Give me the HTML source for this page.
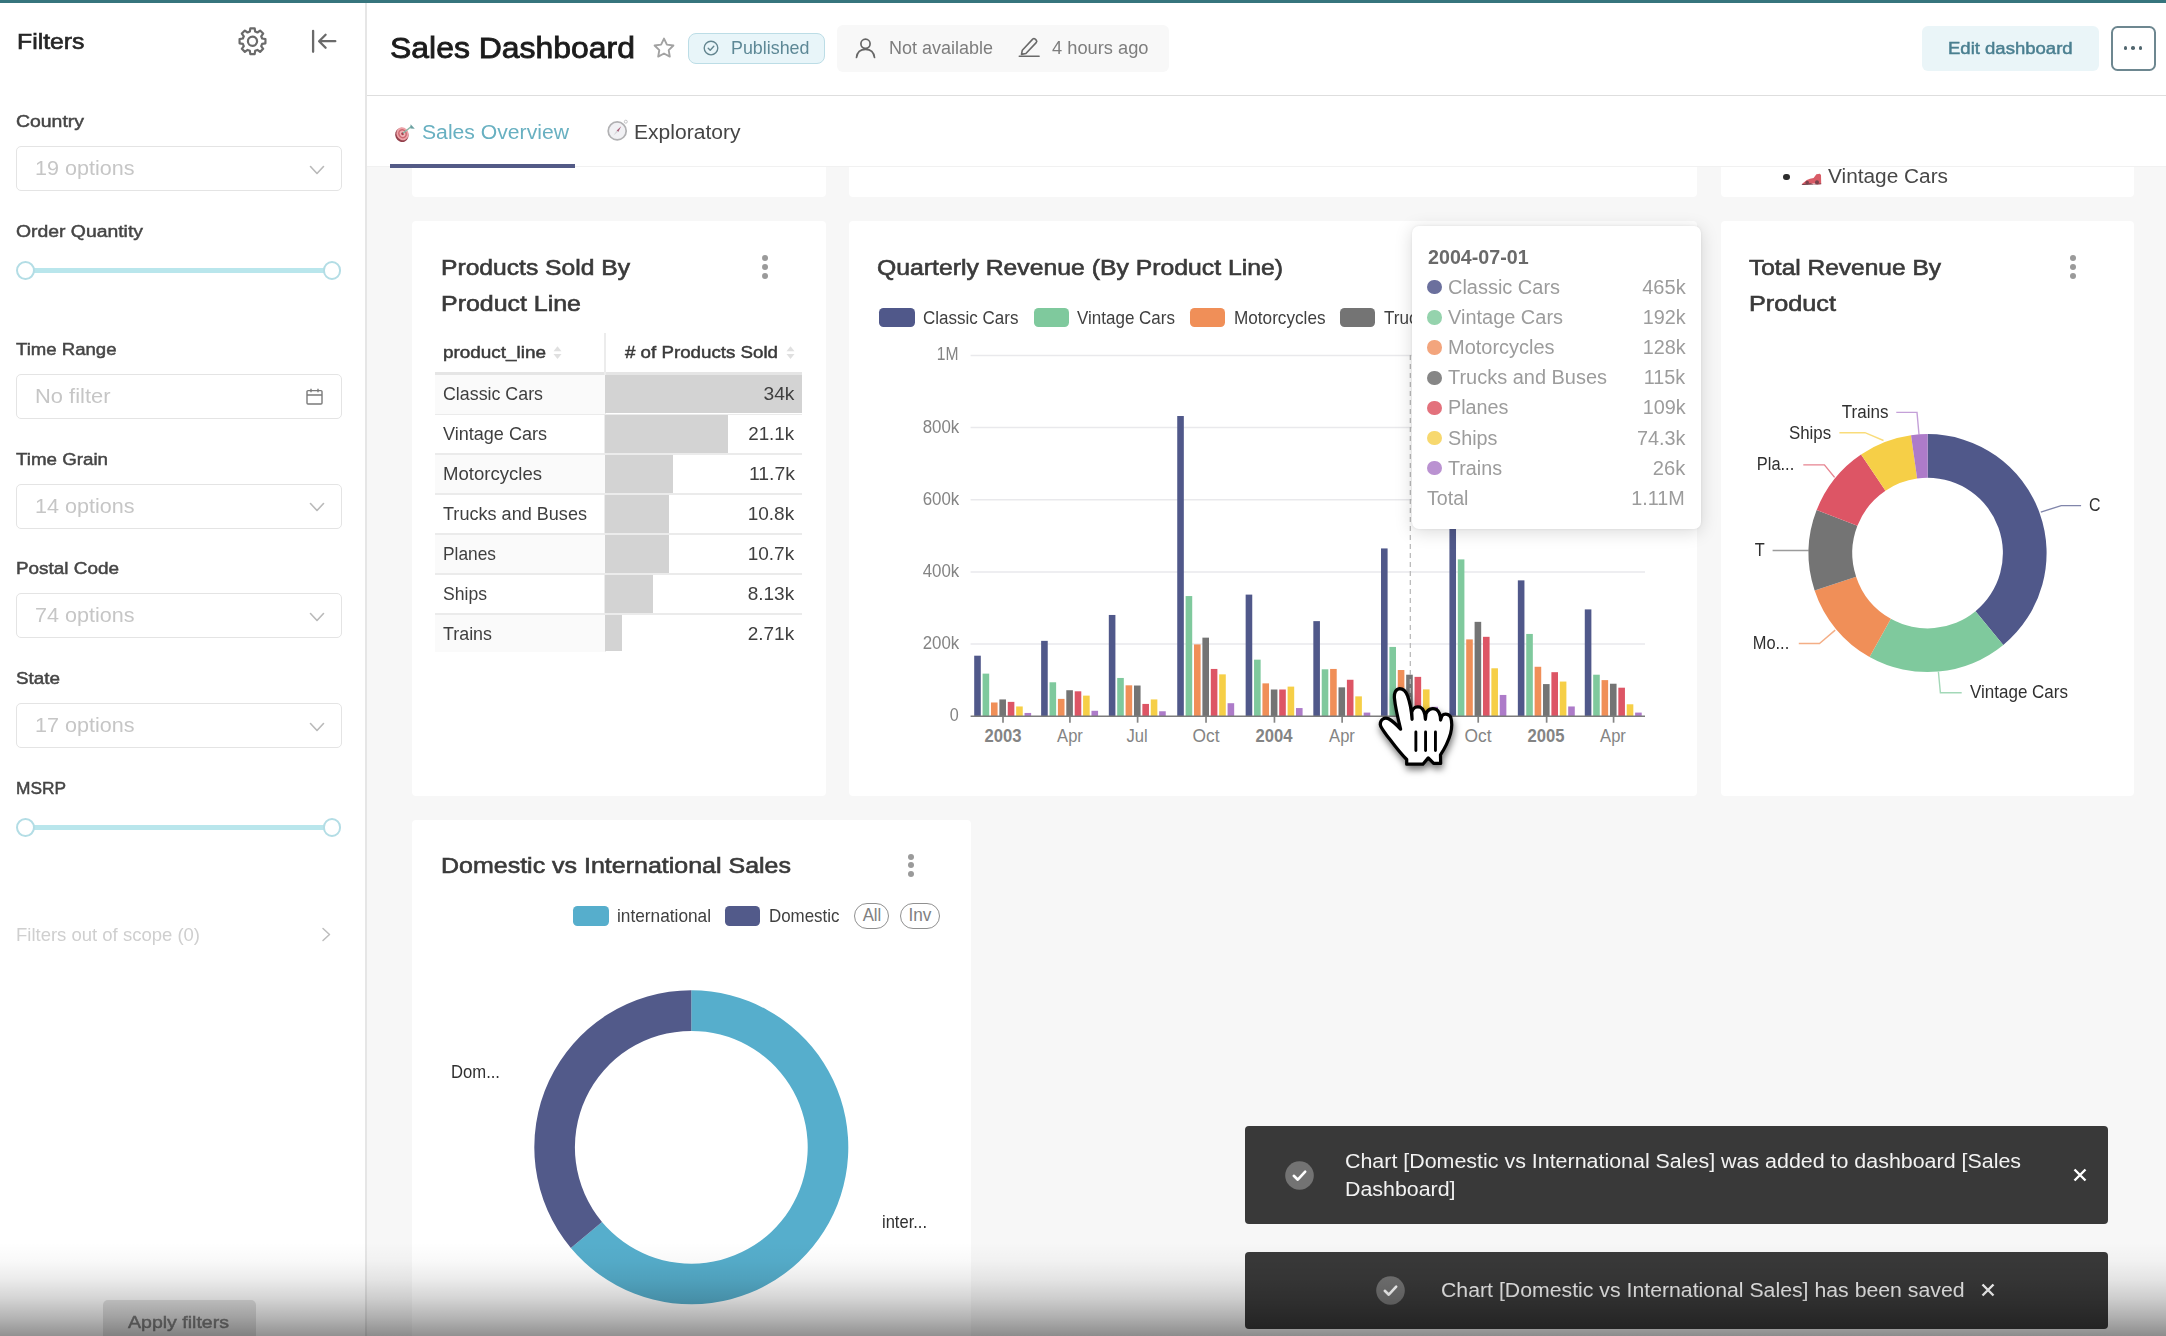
<!DOCTYPE html>
<html><head><meta charset="utf-8"><title>Sales Dashboard</title>
<style>
*{box-sizing:border-box;margin:0;padding:0}
html,body{width:2166px;height:1336px;overflow:hidden}
body{position:relative;background:#f7f7f7;font-family:"Liberation Sans",sans-serif;color:#333}
.a{position:absolute}
.t{position:absolute;white-space:nowrap;line-height:1;display:block}
.card{position:absolute;background:#fff;border-radius:4px}
.sel{position:absolute;left:16px;width:326px;height:45px;border:1.7px solid #e4e4e4;border-radius:5px;background:#fff}
svg{position:absolute;overflow:visible}
</style></head><body>
<div class="a" style="left:0;top:0;width:365px;height:1336px;background:#fff"></div>
<div class="a" style="left:365px;top:0;width:1.5px;height:1336px;background:#e6e6e6"></div>
<div class="a" style="left:366.5px;top:0;width:1800px;height:95px;background:#fff"></div>
<div class="a" style="left:366.5px;top:94.5px;width:1800px;height:1.5px;background:#dedede"></div>
<div class="a" style="left:366.5px;top:96px;width:1800px;height:70.5px;background:#fff"></div>
<div class="a" style="left:0;top:0;width:2166px;height:3px;background:#36757d"></div>
<span class="t" id="t0" style="top:30.00px;font-size:22.74px;color:#262626;-webkit-text-stroke:0.64px #262626;left:16.50px;transform-origin:0 50%;transform:scaleX(1.0906);">Filters</span>
<svg style="left:0;top:0" width="400" height="100" viewBox="0 0 400 100" fill="none" stroke="#6a6a6a" stroke-width="2.2" stroke-linejoin="round" stroke-linecap="round"><circle cx="252.5" cy="41.2" r="4.600"/><path d="M249.83 31.56L250.34 28.28L254.66 28.28L255.17 31.56L257.42 32.50L260.11 30.54L263.16 33.59L261.20 36.28L262.14 38.53L265.42 39.04L265.42 43.36L262.14 43.87L261.20 46.12L263.16 48.81L260.11 51.86L257.42 49.90L255.17 50.84L254.66 54.12L250.34 54.12L249.83 50.84L247.58 49.90L244.89 51.86L241.84 48.81L243.80 46.12L242.86 43.87L239.58 43.36L239.58 39.04L242.86 38.53L243.80 36.28L241.84 33.59L244.89 30.54L247.58 32.50Z"/></svg>
<svg style="left:0;top:0" width="400" height="100" viewBox="0 0 400 100" fill="none" stroke="#6a6a6a" stroke-width="2.3" stroke-linecap="round" stroke-linejoin="round"><path d="M313.100 30.800V51.800M335.300 41.200H319.300M325.600 34.700l-6.500 6.500 6.500 6.500"/></svg>
<span class="t" id="t1" style="top:113.00px;font-size:17.05px;color:#454545;-webkit-text-stroke:0.48px #454545;left:16.20px;transform-origin:0 50%;transform:scaleX(1.1402);">Country</span>
<div class="sel" style="top:146.0px"></div>
<span class="t" id="t2" style="top:158.00px;font-size:20.62px;color:#c6c6c6;left:34.50px;transform-origin:0 50%;transform:scaleX(1.0462);">19 options</span>
<svg style="left:309px;top:164.5px" width="16" height="10" viewBox="0 0 16 10" fill="none" stroke="#b9b9b9" stroke-width="1.6" stroke-linecap="round" stroke-linejoin="round"><path d="M1.5 1.5L8 8.5l6.5-7"/></svg>
<span class="t" id="t3" style="top:223.00px;font-size:17.05px;color:#454545;-webkit-text-stroke:0.48px #454545;left:16.20px;transform-origin:0 50%;transform:scaleX(1.1369);">Order Quantity</span>
<div class="a" style="left:26px;top:267.5px;width:306px;height:5.400px;background:#b9e6ec;border-radius:2px"></div>
<div class="a" style="left:15.9px;top:260.8px;width:18.800px;height:18.800px;border-radius:50%;background:#fff;border:2.600px solid #b3dde5"></div>
<div class="a" style="left:322.6px;top:260.8px;width:18.800px;height:18.800px;border-radius:50%;background:#fff;border:2.600px solid #b3dde5"></div>
<span class="t" id="t4" style="top:341.00px;font-size:17.05px;color:#454545;-webkit-text-stroke:0.48px #454545;left:16.20px;transform-origin:0 50%;transform:scaleX(1.0907);">Time Range</span>
<div class="sel" style="top:374px"></div>
<span class="t" id="t5" style="top:386.00px;font-size:20.62px;color:#c6c6c6;left:34.50px;transform-origin:0 50%;transform:scaleX(1.0631);">No filter</span>
<svg style="left:306px;top:388px" width="17" height="17" viewBox="0 0 17 17" fill="none" stroke="#7a7a7a" stroke-width="1.4" stroke-linejoin="round"><rect x="1" y="2.6" width="15" height="13.4" rx="1"/><path d="M1 7h15M5 .8v3.4M12 .8v3.4"/></svg>
<span class="t" id="t6" style="top:451.00px;font-size:17.05px;color:#454545;-webkit-text-stroke:0.48px #454545;left:16.20px;transform-origin:0 50%;transform:scaleX(1.1006);">Time Grain</span>
<div class="sel" style="top:483.5px"></div>
<span class="t" id="t7" style="top:496.00px;font-size:20.62px;color:#c6c6c6;left:34.50px;transform-origin:0 50%;transform:scaleX(1.0462);">14 options</span>
<svg style="left:309px;top:502.0px" width="16" height="10" viewBox="0 0 16 10" fill="none" stroke="#b9b9b9" stroke-width="1.6" stroke-linecap="round" stroke-linejoin="round"><path d="M1.5 1.5L8 8.5l6.5-7"/></svg>
<span class="t" id="t8" style="top:560.00px;font-size:17.05px;color:#454545;-webkit-text-stroke:0.48px #454545;left:16.20px;transform-origin:0 50%;transform:scaleX(1.1100);">Postal Code</span>
<div class="sel" style="top:593.0px"></div>
<span class="t" id="t9" style="top:605.00px;font-size:20.62px;color:#c6c6c6;left:34.50px;transform-origin:0 50%;transform:scaleX(1.0462);">74 options</span>
<svg style="left:309px;top:611.5px" width="16" height="10" viewBox="0 0 16 10" fill="none" stroke="#b9b9b9" stroke-width="1.6" stroke-linecap="round" stroke-linejoin="round"><path d="M1.5 1.5L8 8.5l6.5-7"/></svg>
<span class="t" id="t10" style="top:670.00px;font-size:17.05px;color:#454545;-webkit-text-stroke:0.48px #454545;left:16.20px;transform-origin:0 50%;transform:scaleX(1.1060);">State</span>
<div class="sel" style="top:703.0px"></div>
<span class="t" id="t11" style="top:715.00px;font-size:20.62px;color:#c6c6c6;left:34.50px;transform-origin:0 50%;transform:scaleX(1.0462);">17 options</span>
<svg style="left:309px;top:721.5px" width="16" height="10" viewBox="0 0 16 10" fill="none" stroke="#b9b9b9" stroke-width="1.6" stroke-linecap="round" stroke-linejoin="round"><path d="M1.5 1.5L8 8.5l6.5-7"/></svg>
<span class="t" id="t12" style="top:780.00px;font-size:17.05px;color:#454545;-webkit-text-stroke:0.48px #454545;left:16.20px;transform-origin:0 50%;transform:scaleX(1.0159);">MSRP</span>
<div class="a" style="left:26px;top:824.5px;width:306px;height:5.400px;background:#b9e6ec;border-radius:2px"></div>
<div class="a" style="left:15.9px;top:817.8px;width:18.800px;height:18.800px;border-radius:50%;background:#fff;border:2.600px solid #b3dde5"></div>
<div class="a" style="left:322.6px;top:817.8px;width:18.800px;height:18.800px;border-radius:50%;background:#fff;border:2.600px solid #b3dde5"></div>
<span class="t" id="t13" style="top:927.00px;font-size:17.67px;color:#cfcfcf;left:16.20px;transform-origin:0 50%;transform:scaleX(1.0475);">Filters out of scope (0)</span>
<svg style="left:321px;top:927px" width="10" height="15" viewBox="0 0 10 15" fill="none" stroke="#bdbdbd" stroke-width="1.5" stroke-linecap="round" stroke-linejoin="round"><path d="M2 1.5l6.5 6-6.5 6"/></svg>
<div class="a" style="left:103px;top:1299.5px;width:152.5px;height:45px;background:#e3e3e3;border-radius:5px"></div>
<span class="t" id="t14" style="top:1314.00px;font-size:17.05px;color:#7c7c7c;-webkit-text-stroke:0.48px #7c7c7c;left:128.00px;transform-origin:0 50%;transform:scaleX(1.1473);">Apply filters</span>
<span class="t" id="t15" style="top:33.00px;font-size:29.84px;color:#1b1b1b;-webkit-text-stroke:0.84px #1b1b1b;left:390.00px;transform-origin:0 50%;transform:scaleX(1.0707);">Sales Dashboard</span>
<svg style="left:652px;top:36px" width="24" height="24" viewBox="0 0 24 24" fill="none" stroke="#a2a2a2" stroke-width="1.9" stroke-linejoin="round"><path d="M12 2.6l2.9 6 6.5.9-4.7 4.6 1.1 6.5L12 17.5l-5.8 3.1 1.1-6.5L2.600 9.5l6.500-.9z"/></svg>
<div class="a" style="left:687.5px;top:33px;width:137px;height:31px;background:#e8f5f9;border:1.5px solid #bcdde6;border-radius:8px"></div>
<svg style="left:703.4px;top:40.300px" width="16" height="16" viewBox="0 0 16 16" fill="none" stroke="#63858f" stroke-width="1.35" stroke-linecap="round" stroke-linejoin="round"><circle cx="8" cy="8" r="6.800"/><path d="M5.200 8.200l2 2 3.600-4"/></svg>
<span class="t" id="t16" style="top:40.00px;font-size:17.67px;color:#5d8896;left:730.50px;transform-origin:0 50%;transform:scaleX(1.0121);">Published</span>
<div class="a" style="left:837px;top:25px;width:332px;height:46.5px;background:#f8f8f8;border-radius:6px"></div>
<svg style="left:855px;top:36.600px" width="21" height="22" viewBox="0 0 21 22" fill="none" stroke="#666" stroke-width="1.7" stroke-linecap="round"><circle cx="10.5" cy="6.8" r="4.6"/><path d="M1.5 20.5c.6-5.2 4.2-8.2 9-8.2s8.400 3 9 8.200"/></svg>
<span class="t" id="t17" style="top:40.00px;font-size:17.67px;color:#7d7d7d;left:889.00px;transform-origin:0 50%;transform:scaleX(1.0188);">Not available</span>
<svg style="left:1018px;top:36.300px" width="22" height="22" viewBox="0 0 22 22" fill="none" stroke="#6a6a6a" stroke-width="1.600" stroke-linecap="round" stroke-linejoin="round"><path d="M4.300 14.200L14.700 3.100a1.800 1.800 0 0 1 2.500 0l1 1a1.800 1.800 0 0 1 0 2.500L7.900 17.500l-4.400.900z"/><path d="M1.300 20.300h19.800"/></svg>
<span class="t" id="t18" style="top:40.00px;font-size:17.67px;color:#7d7d7d;left:1052.00px;transform-origin:0 50%;transform:scaleX(1.0347);">4 hours ago</span>
<div class="a" style="left:1921.5px;top:25.5px;width:177px;height:45px;background:#eaf5f8;border-radius:6px"></div>
<span class="t" id="t19" style="top:40.00px;font-size:17.05px;color:#4a7f90;-webkit-text-stroke:0.48px #4a7f90;left:1948.00px;transform-origin:0 50%;transform:scaleX(1.0875);">Edit dashboard</span>
<div class="a" style="left:2110.5px;top:25.5px;width:45.500px;height:45px;background:#fff;border:2.200px solid #6d8790;border-radius:6.500px"></div>
<div class="a" style="left:2123.9px;top:46.4px;width:3.6px;height:3.6px;border-radius:50%;background:#52676f"></div>
<div class="a" style="left:2131.4px;top:46.4px;width:3.6px;height:3.6px;border-radius:50%;background:#52676f"></div>
<div class="a" style="left:2138.9px;top:46.4px;width:3.6px;height:3.6px;border-radius:50%;background:#52676f"></div>
<svg style="left:392px;top:122px" width="24" height="24" viewBox="392 122 24 24"><g transform="rotate(-25 402.200 134)"><ellipse cx="401.500" cy="134.700" rx="6.600" ry="7.200" fill="#93404c"/><ellipse cx="402.600" cy="133.900" rx="6" ry="6.700" fill="#eea3a8"/><ellipse cx="402.600" cy="133.900" rx="4.300" ry="4.800" fill="#cb6870"/><ellipse cx="402.600" cy="133.900" rx="2.800" ry="3.200" fill="#f0b3b6"/><ellipse cx="402.600" cy="133.900" rx="1.300" ry="1.500" fill="#a3434e"/></g><path d="M403 133.300L411.300 126.500" stroke="#86b9a8" stroke-width="1.400"/><path d="M410.600 124.200l4.200 4.500-4.400-.2z" fill="#6a9fa0"/></svg>
<span class="t" id="t20" style="top:122.00px;font-size:20.62px;color:#68b0c1;left:421.60px;transform-origin:0 50%;transform:scaleX(1.0267);">Sales Overview</span>
<svg style="left:605px;top:118px" width="26" height="26" viewBox="605 118 26 26"><circle cx="625.800" cy="121.700" r="1.500" fill="none" stroke="#c4c4c6" stroke-width="1"/><circle cx="617.200" cy="130.900" r="9" fill="#f1f1f4" stroke="#b1b1b3" stroke-width="1.700"/><path d="M621.200 126.300l-3 5.600-1.500-1.300z" fill="#a8607a"/><path d="M613.400 135.600l3.200-5.100 1.500 1.300z" fill="#d4d4d8"/></svg>
<span class="t" id="t21" style="top:122.00px;font-size:20.62px;color:#454545;left:633.50px;transform-origin:0 50%;transform:scaleX(1.0217);">Exploratory</span>
<div class="card" style="left:412.0px;top:160px;width:414.0px;height:37.300px"></div>
<div class="card" style="left:412.0px;top:221px;width:414.0px;height:575px"></div>
<div class="card" style="left:849.0px;top:160px;width:848.0px;height:37.300px"></div>
<div class="card" style="left:849.0px;top:221px;width:848.0px;height:575px"></div>
<div class="card" style="left:1721.0px;top:160px;width:412.7px;height:37.300px"></div>
<div class="card" style="left:1721.0px;top:221px;width:412.7px;height:575px"></div>
<div class="card" style="left:412px;top:820px;width:558.5px;height:540px"></div>
<div class="a" style="left:366.5px;top:150px;width:1800px;height:16.500px;background:#fff"></div>
<div class="a" style="left:366.5px;top:165.500px;width:1800px;height:1.200px;background:#f1f1f1"></div>
<div class="a" style="left:389.5px;top:164px;width:185px;height:3.5px;background:#535a86"></div>
<div class="a" style="left:1783.1px;top:173.500px;width:6.600px;height:6.600px;border-radius:50%;background:#2e2e2e"></div>
<svg style="left:1801px;top:171px" width="22" height="14" viewBox="1801 171 22 14"><path d="M1801.600 184.300l5.200-4.300 3.200-1.300 3.600-.8 2.800-3.600 3.400-.6 1.200 1.200.2 9-4 .6-3-1-5 .4z" fill="#d95c67"/><path d="M1801.600 184.300l4-.6 5-.4 3 1 4-.6 3.600-.2v.8l-19 .8z" fill="#6d3a44"/><circle cx="1807.200" cy="182.600" r="1.800" fill="#7a434c"/><circle cx="1817" cy="182.300" r="2" fill="#7a434c"/></svg>
<span class="t" id="t22" style="top:166.00px;font-size:20.62px;color:#484848;left:1827.70px;transform-origin:0 50%;transform:scaleX(1.0104);">Vintage Cars</span>
<span class="t" id="t23" style="top:256.00px;font-size:22.74px;color:#3a3a3a;-webkit-text-stroke:0.64px #3a3a3a;left:441.00px;transform-origin:0 50%;transform:scaleX(1.0838);">Products Sold By</span>
<span class="t" id="t24" style="top:292.00px;font-size:22.74px;color:#3a3a3a;-webkit-text-stroke:0.64px #3a3a3a;left:441.00px;transform-origin:0 50%;transform:scaleX(1.0967);">Product Line</span>
<div class="a" style="left:762.0px;top:255.4px;width:6px;height:6px;border-radius:50%;background:#9a9a9a"></div>
<div class="a" style="left:762.0px;top:264.0px;width:6px;height:6px;border-radius:50%;background:#9a9a9a"></div>
<div class="a" style="left:762.0px;top:272.6px;width:6px;height:6px;border-radius:50%;background:#9a9a9a"></div>
<div class="a" style="left:435.0px;top:372px;width:367.0px;height:3.200px;background:#e5e5e5"></div>
<div class="a" style="left:603.8px;top:333px;width:2px;height:318.600px;background:#ececec"></div>
<span class="t" id="t25" style="top:344.00px;font-size:17.05px;color:#3a3a3a;-webkit-text-stroke:0.48px #3a3a3a;left:443.00px;transform-origin:0 50%;transform:scaleX(1.1100);">product_line</span>
<span class="t" id="t26" style="top:344.00px;font-size:17.05px;color:#3a3a3a;-webkit-text-stroke:0.48px #3a3a3a;left:625.00px;transform-origin:0 50%;transform:scaleX(1.0994);"># of Products Sold</span>
<svg style="left:552.9px;top:346.300px" width="9" height="13.400" viewBox="0 0 9 13.400"><path d="M4.500 0.300L8.500 5.300h-8z" fill="#e0e0e0"/><path d="M4.500 13.100L8.500 8.100h-8z" fill="#e0e0e0"/></svg>
<svg style="left:785.5px;top:346.300px" width="9" height="13.400" viewBox="0 0 9 13.400"><path d="M4.500 0.300L8.500 5.300h-8z" fill="#e0e0e0"/><path d="M4.500 13.100L8.500 8.100h-8z" fill="#e0e0e0"/></svg>
<div class="a" style="left:435.0px;top:375.2px;width:169.8px;height:39.1px;background:#fafafa"></div>
<div class="a" style="left:604.6px;top:375.2px;width:197.2px;height:38.3px;background:#d3d3d3"></div>
<span class="t" id="t27" style="top:386.00px;font-size:17.67px;color:#3f3f3f;left:443.00px;transform-origin:0 50%;transform:scaleX(1.0091);">Classic Cars</span>
<span class="t" id="t28" style="top:386.00px;font-size:17.67px;color:#3f3f3f;right:1371.50px;transform-origin:100% 50%;transform:scaleX(1.0889);">34k</span>
<div class="a" style="left:435.0px;top:413.5px;width:367.0px;height:1.5px;background:#ebebeb"></div>
<div class="a" style="left:604.6px;top:415.0px;width:123.0px;height:38.4px;background:#d3d3d3"></div>
<span class="t" id="t29" style="top:426.00px;font-size:17.67px;color:#3f3f3f;left:443.00px;transform-origin:0 50%;transform:scaleX(1.0221);">Vintage Cars</span>
<span class="t" id="t30" style="top:426.00px;font-size:17.67px;color:#3f3f3f;right:1371.50px;transform-origin:100% 50%;transform:scaleX(1.0647);">21.1k</span>
<div class="a" style="left:435.0px;top:454.2px;width:169.8px;height:39.9px;background:#fafafa"></div>
<div class="a" style="left:435.0px;top:453.4px;width:367.0px;height:1.5px;background:#ebebeb"></div>
<div class="a" style="left:604.6px;top:454.9px;width:68.8px;height:38.4px;background:#d3d3d3"></div>
<span class="t" id="t31" style="top:466.00px;font-size:17.67px;color:#3f3f3f;left:443.00px;transform-origin:0 50%;transform:scaleX(1.0511);">Motorcycles</span>
<span class="t" id="t32" style="top:466.00px;font-size:17.67px;color:#3f3f3f;right:1371.50px;transform-origin:100% 50%;transform:scaleX(1.0981);">11.7k</span>
<div class="a" style="left:435.0px;top:493.3px;width:367.0px;height:1.5px;background:#ebebeb"></div>
<div class="a" style="left:604.6px;top:494.8px;width:64.0px;height:38.4px;background:#d3d3d3"></div>
<span class="t" id="t33" style="top:506.00px;font-size:17.67px;color:#3f3f3f;left:443.00px;transform-origin:0 50%;transform:scaleX(1.0238);">Trucks and Buses</span>
<span class="t" id="t34" style="top:506.00px;font-size:17.67px;color:#3f3f3f;right:1371.50px;transform-origin:100% 50%;transform:scaleX(1.0763);">10.8k</span>
<div class="a" style="left:435.0px;top:534.0px;width:169.8px;height:39.9px;background:#fafafa"></div>
<div class="a" style="left:435.0px;top:533.2px;width:367.0px;height:1.5px;background:#ebebeb"></div>
<div class="a" style="left:604.6px;top:534.7px;width:64.0px;height:38.4px;background:#d3d3d3"></div>
<span class="t" id="t35" style="top:546.00px;font-size:17.67px;color:#3f3f3f;left:443.00px;transform-origin:0 50%;transform:scaleX(0.9815);">Planes</span>
<span class="t" id="t36" style="top:546.00px;font-size:17.67px;color:#3f3f3f;right:1371.50px;transform-origin:100% 50%;transform:scaleX(1.0763);">10.7k</span>
<div class="a" style="left:435.0px;top:573.1px;width:367.0px;height:1.5px;background:#ebebeb"></div>
<div class="a" style="left:604.6px;top:574.6px;width:48.8px;height:38.4px;background:#d3d3d3"></div>
<span class="t" id="t37" style="top:586.00px;font-size:17.67px;color:#3f3f3f;left:443.00px;transform-origin:0 50%;transform:scaleX(0.9961);">Ships</span>
<span class="t" id="t38" style="top:586.00px;font-size:17.67px;color:#3f3f3f;right:1371.50px;transform-origin:100% 50%;transform:scaleX(1.0763);">8.13k</span>
<div class="a" style="left:435.0px;top:613.8px;width:169.8px;height:37.8px;background:#fafafa"></div>
<div class="a" style="left:435.0px;top:613.0px;width:367.0px;height:1.5px;background:#ebebeb"></div>
<div class="a" style="left:604.6px;top:614.5px;width:17.7px;height:36.3px;background:#d3d3d3"></div>
<span class="t" id="t39" style="top:626.00px;font-size:17.67px;color:#3f3f3f;left:443.00px;transform-origin:0 50%;transform:scaleX(1.0123);">Trains</span>
<span class="t" id="t40" style="top:626.00px;font-size:17.67px;color:#3f3f3f;right:1371.50px;transform-origin:100% 50%;transform:scaleX(1.0763);">2.71k</span>
<span class="t" id="t41" style="top:256.00px;font-size:22.74px;color:#3a3a3a;-webkit-text-stroke:0.64px #3a3a3a;left:877.00px;transform-origin:0 50%;transform:scaleX(1.0892);">Quarterly Revenue (By Product Line)</span>
<div class="a" style="left:879.2px;top:308.100px;width:35.400px;height:19.400px;border-radius:4.500px;background:#50588a"></div>
<span class="t" id="t42" style="top:310.00px;font-size:17.67px;color:#404040;left:922.80px;transform-origin:0 50%;transform:scaleX(0.9627);">Classic Cars</span>
<div class="a" style="left:1033.5px;top:308.100px;width:35.400px;height:19.400px;border-radius:4.500px;background:#7fc99d"></div>
<span class="t" id="t43" style="top:310.00px;font-size:17.67px;color:#404040;left:1077.30px;transform-origin:0 50%;transform:scaleX(0.9631);">Vintage Cars</span>
<div class="a" style="left:1190.0px;top:308.100px;width:35.400px;height:19.400px;border-radius:4.500px;background:#f08f58"></div>
<span class="t" id="t44" style="top:310.00px;font-size:17.67px;color:#404040;left:1233.80px;transform-origin:0 50%;transform:scaleX(0.9715);">Motorcycles</span>
<div class="a" style="left:1340.0px;top:308.100px;width:35.400px;height:19.400px;border-radius:4.500px;background:#747474"></div>
<span class="t" id="t45" style="top:310.00px;font-size:17.67px;color:#404040;left:1383.80px;transform-origin:0 50%;transform:scaleX(0.9669);">Trucks and Buses</span>
<svg style="left:0;top:0" width="2166" height="1336" viewBox="0 0 2166 1336" shape-rendering="auto"><path d="M970.6 644.04H1645.0" stroke="#e9e9ec" stroke-width="1.5"/><path d="M970.6 571.88H1645.0" stroke="#e9e9ec" stroke-width="1.5"/><path d="M970.6 499.72H1645.0" stroke="#e9e9ec" stroke-width="1.5"/><path d="M970.6 427.56H1645.0" stroke="#e9e9ec" stroke-width="1.5"/><path d="M970.6 355.40H1645.0" stroke="#e9e9ec" stroke-width="1.5"/><rect x="974.20" y="655.69" width="6.60" height="60.51" fill="#50588a"/><rect x="982.59" y="673.63" width="6.60" height="42.57" fill="#7fc99d"/><rect x="990.98" y="702.49" width="6.60" height="13.71" fill="#f08f58"/><rect x="999.37" y="699.42" width="6.60" height="16.78" fill="#747474"/><rect x="1007.76" y="701.88" width="6.60" height="14.32" fill="#dd5565"/><rect x="1016.15" y="706.46" width="6.60" height="9.74" fill="#f6cf47"/><rect x="1024.54" y="712.95" width="6.60" height="3.25" fill="#ad7bc9"/><path d="M1003.00 716.2v6.500" stroke="#858585" stroke-width="1.700"/><rect x="1041.13" y="640.86" width="6.60" height="75.34" fill="#50588a"/><rect x="1049.52" y="682.28" width="6.60" height="33.92" fill="#7fc99d"/><rect x="1057.91" y="698.88" width="6.60" height="17.32" fill="#f08f58"/><rect x="1066.30" y="690.22" width="6.60" height="25.98" fill="#747474"/><rect x="1074.69" y="691.30" width="6.60" height="24.90" fill="#dd5565"/><rect x="1083.08" y="695.63" width="6.60" height="20.57" fill="#f6cf47"/><rect x="1091.47" y="710.79" width="6.60" height="5.41" fill="#ad7bc9"/><path d="M1069.93 716.2v6.500" stroke="#858585" stroke-width="1.700"/><rect x="1108.81" y="614.96" width="6.60" height="101.24" fill="#50588a"/><rect x="1117.20" y="677.96" width="6.60" height="38.24" fill="#7fc99d"/><rect x="1125.59" y="685.32" width="6.60" height="30.88" fill="#f08f58"/><rect x="1133.98" y="685.53" width="6.60" height="30.67" fill="#747474"/><rect x="1142.37" y="703.93" width="6.60" height="12.27" fill="#dd5565"/><rect x="1150.76" y="699.42" width="6.60" height="16.78" fill="#f6cf47"/><rect x="1159.15" y="711.26" width="6.60" height="4.94" fill="#ad7bc9"/><path d="M1137.61 716.2v6.500" stroke="#858585" stroke-width="1.700"/><rect x="1177.23" y="416.01" width="6.60" height="300.19" fill="#50588a"/><rect x="1185.62" y="596.05" width="6.60" height="120.15" fill="#7fc99d"/><rect x="1194.01" y="644.40" width="6.60" height="71.80" fill="#f08f58"/><rect x="1202.40" y="637.65" width="6.60" height="78.55" fill="#747474"/><rect x="1210.79" y="668.94" width="6.60" height="47.26" fill="#dd5565"/><rect x="1219.18" y="674.35" width="6.60" height="41.85" fill="#f6cf47"/><rect x="1227.57" y="703.21" width="6.60" height="12.99" fill="#ad7bc9"/><path d="M1206.03 716.2v6.500" stroke="#858585" stroke-width="1.700"/><rect x="1245.65" y="594.61" width="6.60" height="121.59" fill="#50588a"/><rect x="1254.04" y="659.66" width="6.60" height="56.54" fill="#7fc99d"/><rect x="1262.43" y="683.37" width="6.60" height="32.83" fill="#f08f58"/><rect x="1270.82" y="689.50" width="6.60" height="26.70" fill="#747474"/><rect x="1279.21" y="689.50" width="6.60" height="26.70" fill="#dd5565"/><rect x="1287.60" y="686.61" width="6.60" height="29.59" fill="#f6cf47"/><rect x="1295.99" y="708.05" width="6.60" height="8.15" fill="#ad7bc9"/><path d="M1274.45 716.2v6.500" stroke="#858585" stroke-width="1.700"/><rect x="1313.33" y="621.13" width="6.60" height="95.07" fill="#50588a"/><rect x="1321.72" y="669.30" width="6.60" height="46.90" fill="#7fc99d"/><rect x="1330.11" y="668.94" width="6.60" height="47.26" fill="#f08f58"/><rect x="1338.50" y="687.34" width="6.60" height="28.86" fill="#747474"/><rect x="1346.89" y="679.76" width="6.60" height="36.44" fill="#dd5565"/><rect x="1355.28" y="696.36" width="6.60" height="19.84" fill="#f6cf47"/><rect x="1363.67" y="712.59" width="6.60" height="3.61" fill="#ad7bc9"/><path d="M1342.13 716.2v6.500" stroke="#858585" stroke-width="1.700"/><rect x="1381.00" y="548.43" width="6.60" height="167.77" fill="#50588a"/><rect x="1389.39" y="646.93" width="6.60" height="69.27" fill="#7fc99d"/><rect x="1397.78" y="670.02" width="6.60" height="46.18" fill="#f08f58"/><rect x="1406.17" y="674.71" width="6.60" height="41.49" fill="#747474"/><rect x="1414.56" y="676.87" width="6.60" height="39.33" fill="#dd5565"/><rect x="1422.95" y="689.39" width="6.60" height="26.81" fill="#f6cf47"/><rect x="1431.34" y="706.82" width="6.60" height="9.38" fill="#ad7bc9"/><path d="M1409.80 716.2v6.500" stroke="#858585" stroke-width="1.700"/><rect x="1449.42" y="470.86" width="6.60" height="245.34" fill="#50588a"/><rect x="1457.81" y="559.40" width="6.60" height="156.80" fill="#7fc99d"/><rect x="1466.20" y="639.39" width="6.60" height="76.81" fill="#f08f58"/><rect x="1474.59" y="621.85" width="6.60" height="94.35" fill="#747474"/><rect x="1482.98" y="636.82" width="6.60" height="79.38" fill="#dd5565"/><rect x="1491.37" y="668.29" width="6.60" height="47.91" fill="#f6cf47"/><rect x="1499.76" y="694.95" width="6.60" height="21.25" fill="#ad7bc9"/><path d="M1478.22 716.2v6.500" stroke="#858585" stroke-width="1.700"/><rect x="1517.84" y="580.36" width="6.60" height="135.84" fill="#50588a"/><rect x="1526.23" y="633.94" width="6.60" height="82.26" fill="#7fc99d"/><rect x="1534.62" y="666.77" width="6.60" height="49.43" fill="#f08f58"/><rect x="1543.01" y="684.09" width="6.60" height="32.11" fill="#747474"/><rect x="1551.40" y="672.18" width="6.60" height="44.02" fill="#dd5565"/><rect x="1559.79" y="681.56" width="6.60" height="34.64" fill="#f6cf47"/><rect x="1568.18" y="706.46" width="6.60" height="9.74" fill="#ad7bc9"/><path d="M1546.64 716.2v6.500" stroke="#858585" stroke-width="1.700"/><rect x="1584.78" y="609.40" width="6.60" height="106.80" fill="#50588a"/><rect x="1593.17" y="674.71" width="6.60" height="41.49" fill="#7fc99d"/><rect x="1601.56" y="680.12" width="6.60" height="36.08" fill="#f08f58"/><rect x="1609.95" y="683.73" width="6.60" height="32.47" fill="#747474"/><rect x="1618.34" y="687.70" width="6.60" height="28.50" fill="#dd5565"/><rect x="1626.73" y="704.29" width="6.60" height="11.91" fill="#f6cf47"/><rect x="1635.12" y="712.59" width="6.60" height="3.61" fill="#ad7bc9"/><path d="M1613.58 716.2v6.500" stroke="#858585" stroke-width="1.700"/><path d="M970.6 716.3H1645.0" stroke="#7c7c7c" stroke-width="1.500"/><path d="M1410.300 355V716" stroke="#b5b5b5" stroke-width="1.200" stroke-dasharray="5 4"/></svg>
<span class="t" id="t46" style="top:707.00px;font-size:17.67px;color:#848484;right:1207.20px;transform-origin:100% 50%;transform:scaleX(0.9157);">0</span>
<span class="t" id="t47" style="top:635.00px;font-size:17.67px;color:#848484;right:1207.20px;transform-origin:100% 50%;transform:scaleX(0.9557);">200k</span>
<span class="t" id="t48" style="top:563.00px;font-size:17.67px;color:#848484;right:1207.20px;transform-origin:100% 50%;transform:scaleX(0.9557);">400k</span>
<span class="t" id="t49" style="top:491.00px;font-size:17.67px;color:#848484;right:1207.20px;transform-origin:100% 50%;transform:scaleX(0.9557);">600k</span>
<span class="t" id="t50" style="top:419.00px;font-size:17.67px;color:#848484;right:1207.20px;transform-origin:100% 50%;transform:scaleX(0.9557);">800k</span>
<span class="t" id="t51" style="top:346.00px;font-size:17.67px;color:#848484;right:1207.20px;transform-origin:100% 50%;transform:scaleX(0.8846);">1M</span>
<span class="t" id="t52" style="top:728.00px;font-size:17.67px;color:#848484;font-weight:700;left:1002.70px;transform:translateX(-50%) scaleX(0.9419);">2003</span>
<span class="t" id="t53" style="top:728.00px;font-size:17.67px;color:#848484;left:1069.63px;transform:translateX(-50%) scaleX(0.9387);">Apr</span>
<span class="t" id="t54" style="top:728.00px;font-size:17.67px;color:#848484;left:1137.31px;transform:translateX(-50%) scaleX(0.9390);">Jul</span>
<span class="t" id="t55" style="top:728.00px;font-size:17.67px;color:#848484;left:1205.73px;transform:translateX(-50%) scaleX(0.9829);">Oct</span>
<span class="t" id="t56" style="top:728.00px;font-size:17.67px;color:#848484;font-weight:700;left:1274.15px;transform:translateX(-50%) scaleX(0.9419);">2004</span>
<span class="t" id="t57" style="top:728.00px;font-size:17.67px;color:#848484;left:1341.83px;transform:translateX(-50%) scaleX(0.9387);">Apr</span>
<span class="t" id="t58" style="top:728.00px;font-size:17.67px;color:#848484;left:1409.50px;transform:translateX(-50%) scaleX(0.9390);">Jul</span>
<span class="t" id="t59" style="top:728.00px;font-size:17.67px;color:#848484;left:1477.92px;transform:translateX(-50%) scaleX(0.9829);">Oct</span>
<span class="t" id="t60" style="top:728.00px;font-size:17.67px;color:#848484;font-weight:700;left:1546.34px;transform:translateX(-50%) scaleX(0.9419);">2005</span>
<span class="t" id="t61" style="top:728.00px;font-size:17.67px;color:#848484;left:1613.28px;transform:translateX(-50%) scaleX(0.9387);">Apr</span>
<span class="t" id="t62" style="top:256.00px;font-size:22.74px;color:#3a3a3a;-webkit-text-stroke:0.64px #3a3a3a;left:1749.00px;transform-origin:0 50%;transform:scaleX(1.0774);">Total Revenue By</span>
<span class="t" id="t63" style="top:292.00px;font-size:22.74px;color:#3a3a3a;-webkit-text-stroke:0.64px #3a3a3a;left:1749.00px;transform-origin:0 50%;transform:scaleX(1.1103);">Product</span>
<div class="a" style="left:2070.0px;top:255.4px;width:6px;height:6px;border-radius:50%;background:#9a9a9a"></div>
<div class="a" style="left:2070.0px;top:264.0px;width:6px;height:6px;border-radius:50%;background:#9a9a9a"></div>
<div class="a" style="left:2070.0px;top:272.6px;width:6px;height:6px;border-radius:50%;background:#9a9a9a"></div>
<svg style="left:0;top:0" width="2166" height="1336" viewBox="0 0 2166 1336"><path d="M1927.60 434.10A119.00 119.00 0 0 1 2003.29 644.92L1975.50 611.20A75.30 75.30 0 0 0 1927.60 477.80Z" fill="#50588a"/><path d="M2003.29 644.92A119.00 119.00 0 0 1 1869.54 656.98L1890.86 618.83A75.30 75.30 0 0 0 1975.50 611.20Z" fill="#7fc99d"/><path d="M1869.54 656.98A119.00 119.00 0 0 1 1814.62 590.47L1856.11 576.74A75.30 75.30 0 0 0 1890.86 618.83Z" fill="#f08f58"/><path d="M1814.62 590.47A119.00 119.00 0 0 1 1816.65 510.07L1857.40 525.87A75.30 75.30 0 0 0 1856.11 576.74Z" fill="#747474"/><path d="M1816.65 510.07A119.00 119.00 0 0 1 1861.06 454.44L1885.49 490.67A75.30 75.30 0 0 0 1857.40 525.87Z" fill="#dd5565"/><path d="M1861.06 454.44A119.00 119.00 0 0 1 1911.04 435.26L1917.12 478.53A75.30 75.30 0 0 0 1885.49 490.67Z" fill="#f6cf47"/><path d="M1911.04 435.26A119.00 119.00 0 0 1 1927.60 434.10L1927.60 477.80A75.30 75.30 0 0 0 1917.12 478.53Z" fill="#ad7bc9"/><path d="M1919.0 434.5L1917.0 412.4L1896.3 412.4" fill="none" stroke="#ad7bc9" stroke-width="1.400" stroke-opacity=".72"/><path d="M1883.5 440.5L1865.0 432.7L1839.4 432.7" fill="none" stroke="#f6cf47" stroke-width="1.400" stroke-opacity=".72"/><path d="M1834.6 477.4L1824.4 464.9L1803.3 464.9" fill="none" stroke="#dd5565" stroke-width="1.400" stroke-opacity=".72"/><path d="M1808.7 550.5L1772.6 550.5" fill="none" stroke="#747474" stroke-width="1.400" stroke-opacity=".72"/><path d="M1835.2 630.1L1819.5 643.5L1798.8 643.5" fill="none" stroke="#f08f58" stroke-width="1.400" stroke-opacity=".72"/><path d="M1938.4 671.7L1940.4 692.7L1961.7 692.7" fill="none" stroke="#7fc99d" stroke-width="1.400" stroke-opacity=".72"/><path d="M2040.8 512.1L2061.2 505.6L2081.1 505.6" fill="none" stroke="#50588a" stroke-width="1.400" stroke-opacity=".72"/></svg>
<span class="t" id="t64" style="top:404.00px;font-size:17.67px;color:#303030;right:277.80px;transform-origin:100% 50%;transform:scaleX(0.9627);">Trains</span>
<span class="t" id="t65" style="top:425.00px;font-size:17.67px;color:#303030;right:335.00px;transform-origin:100% 50%;transform:scaleX(0.9554);">Ships</span>
<span class="t" id="t66" style="top:456.00px;font-size:17.67px;color:#303030;right:371.50px;transform-origin:100% 50%;transform:scaleX(0.9292);">Pla...</span>
<span class="t" id="t67" style="top:542.00px;font-size:17.67px;color:#303030;right:401.40px;transform-origin:100% 50%;transform:scaleX(0.9262);">T</span>
<span class="t" id="t68" style="top:635.00px;font-size:17.67px;color:#303030;right:376.30px;transform-origin:100% 50%;transform:scaleX(0.9299);">Mo...</span>
<span class="t" id="t69" style="top:684.00px;font-size:17.67px;color:#303030;left:1969.70px;transform-origin:0 50%;transform:scaleX(0.9631);">Vintage Cars</span>
<span class="t" id="t70" style="top:497.00px;font-size:17.67px;color:#303030;left:2088.80px;transform-origin:0 50%;transform:scaleX(0.9009);">C</span>
<span class="t" id="t71" style="top:854.00px;font-size:22.74px;color:#3a3a3a;-webkit-text-stroke:0.64px #3a3a3a;left:441.00px;transform-origin:0 50%;transform:scaleX(1.0991);">Domestic vs International Sales</span>
<div class="a" style="left:907.5px;top:853.5px;width:6px;height:6px;border-radius:50%;background:#9a9a9a"></div>
<div class="a" style="left:907.5px;top:862.1px;width:6px;height:6px;border-radius:50%;background:#9a9a9a"></div>
<div class="a" style="left:907.5px;top:870.7px;width:6px;height:6px;border-radius:50%;background:#9a9a9a"></div>
<div class="a" style="left:573px;top:906px;width:35.500px;height:19.600px;border-radius:4.500px;background:#56aecc"></div>
<span class="t" id="t72" style="top:908.00px;font-size:17.67px;color:#404040;left:616.50px;transform-origin:0 50%;transform:scaleX(0.9771);">international</span>
<div class="a" style="left:724.500px;top:906px;width:35.500px;height:19.600px;border-radius:4.500px;background:#525a8a"></div>
<span class="t" id="t73" style="top:908.00px;font-size:17.67px;color:#404040;left:768.50px;transform-origin:0 50%;transform:scaleX(0.9580);">Domestic</span>
<div class="a" style="left:853.700px;top:902.700px;width:35.600px;height:26.300px;border:1.800px solid #909090;border-radius:13.200px"></div>
<span class="t" id="t74" style="top:907.00px;font-size:17.67px;color:#808080;left:871.70px;transform:translateX(-50%) scaleX(0.9529);">All</span>
<div class="a" style="left:899.900px;top:902.700px;width:39.700px;height:26.300px;border:1.800px solid #909090;border-radius:13.200px"></div>
<span class="t" id="t75" style="top:907.00px;font-size:17.67px;color:#808080;left:920.00px;transform:translateX(-50%) scaleX(0.9761);">Inv</span>
<svg style="left:0;top:0" width="2166" height="1336" viewBox="0 0 2166 1336"><path d="M691.30 990.30A157.00 157.00 0 1 1 570.86 1248.01L602.00 1221.96A116.40 116.40 0 1 0 691.30 1030.90Z" fill="#56aecc"/><path d="M570.86 1248.01A157.00 157.00 0 0 1 691.30 990.30L691.30 1030.90A116.40 116.40 0 0 0 602.00 1221.96Z" fill="#525a8a"/></svg>
<span class="t" id="t76" style="top:1064.00px;font-size:17.67px;color:#303030;left:451.10px;transform-origin:0 50%;transform:scaleX(0.9423);">Dom...</span>
<span class="t" id="t77" style="top:1214.00px;font-size:17.67px;color:#303030;left:882.20px;transform-origin:0 50%;transform:scaleX(0.9357);">inter...</span>
<div class="a" style="left:1411.500px;top:225.500px;width:289.500px;height:303px;background:#fff;border-radius:7px;box-shadow:0 3px 18px rgba(0,0,0,.15),0 0 3px rgba(0,0,0,.07)"></div>
<span class="t" id="t78" style="top:247.00px;font-size:20.62px;color:#6a6a6a;font-weight:700;left:1427.70px;transform-origin:0 50%;transform:scaleX(0.9543);">2004-07-01</span>
<div class="a" style="left:1427.2px;top:280.0px;width:14.400px;height:14.400px;border-radius:50%;background:#6b709d"></div>
<span class="t" id="t79" style="top:277.00px;font-size:20.62px;color:#9c9c9c;left:1448.40px;transform-origin:0 50%;transform:scaleX(0.9684);">Classic Cars</span>
<span class="t" id="t80" style="top:277.00px;font-size:20.62px;color:#9c9c9c;right:480.80px;transform-origin:100% 50%;transform:scaleX(0.9731);">465k</span>
<div class="a" style="left:1427.2px;top:310.2px;width:14.400px;height:14.400px;border-radius:50%;background:#95d3ad"></div>
<span class="t" id="t81" style="top:307.00px;font-size:20.62px;color:#9c9c9c;left:1448.40px;transform-origin:0 50%;transform:scaleX(0.9683);">Vintage Cars</span>
<span class="t" id="t82" style="top:307.00px;font-size:20.62px;color:#9c9c9c;right:480.80px;transform-origin:100% 50%;transform:scaleX(0.9619);">192k</span>
<div class="a" style="left:1427.2px;top:340.3px;width:14.400px;height:14.400px;border-radius:50%;background:#f3a57d"></div>
<span class="t" id="t83" style="top:337.00px;font-size:20.62px;color:#9c9c9c;left:1448.40px;transform-origin:0 50%;transform:scaleX(0.9686);">Motorcycles</span>
<span class="t" id="t84" style="top:337.00px;font-size:20.62px;color:#9c9c9c;right:480.80px;transform-origin:100% 50%;transform:scaleX(0.9619);">128k</span>
<div class="a" style="left:1427.2px;top:370.5px;width:14.400px;height:14.400px;border-radius:50%;background:#868686"></div>
<span class="t" id="t85" style="top:367.00px;font-size:20.62px;color:#9c9c9c;left:1448.40px;transform-origin:0 50%;transform:scaleX(0.9684);">Trucks and Buses</span>
<span class="t" id="t86" style="top:367.00px;font-size:20.62px;color:#9c9c9c;right:480.80px;transform-origin:100% 50%;transform:scaleX(0.9613);">115k</span>
<div class="a" style="left:1427.2px;top:400.7px;width:14.400px;height:14.400px;border-radius:50%;background:#e3717c"></div>
<span class="t" id="t87" style="top:397.00px;font-size:20.62px;color:#9c9c9c;left:1448.40px;transform-origin:0 50%;transform:scaleX(0.9601);">Planes</span>
<span class="t" id="t88" style="top:397.00px;font-size:20.62px;color:#9c9c9c;right:480.80px;transform-origin:100% 50%;transform:scaleX(0.9619);">109k</span>
<div class="a" style="left:1427.2px;top:430.9px;width:14.400px;height:14.400px;border-radius:50%;background:#f7d86e"></div>
<span class="t" id="t89" style="top:428.00px;font-size:20.62px;color:#9c9c9c;left:1448.40px;transform-origin:0 50%;transform:scaleX(0.9600);">Ships</span>
<span class="t" id="t90" style="top:428.00px;font-size:20.62px;color:#9c9c9c;right:480.80px;transform-origin:100% 50%;transform:scaleX(0.9619);">74.3k</span>
<div class="a" style="left:1427.2px;top:461.0px;width:14.400px;height:14.400px;border-radius:50%;background:#ba92d1"></div>
<span class="t" id="t91" style="top:458.00px;font-size:20.62px;color:#9c9c9c;left:1448.40px;transform-origin:0 50%;transform:scaleX(0.9558);">Trains</span>
<span class="t" id="t92" style="top:458.00px;font-size:20.62px;color:#9c9c9c;right:480.80px;transform-origin:100% 50%;transform:scaleX(0.9779);">26k</span>
<span class="t" id="t93" style="top:488.00px;font-size:20.62px;color:#9c9c9c;left:1427.30px;transform-origin:0 50%;transform:scaleX(0.9530);">Total</span>
<span class="t" id="t94" style="top:488.00px;font-size:20.62px;color:#9c9c9c;right:480.80px;transform-origin:100% 50%;transform:scaleX(0.9596);">1.11M</span>
<div class="a" style="left:1245px;top:1126px;width:862.500px;height:97.500px;background:#393939;border-radius:4px"></div>
<div class="a" style="left:1245px;top:1252.200px;width:862.500px;height:77px;background:#393939;border-radius:4px"></div>
<svg style="left:1284.6px;top:1160.7px" width="29" height="29" viewBox="0 0 29 29"><circle cx="14.500" cy="14.500" r="14.300" fill="#737373"/><path d="M8.800 14.800l4 3.900 7.400-8" fill="none" stroke="#fff" stroke-width="2.600" stroke-linecap="round" stroke-linejoin="round"/></svg>
<span class="t" id="t95" style="top:1151.00px;font-size:20.62px;color:#f2f2f2;left:1345.00px;transform-origin:0 50%;transform:scaleX(1.0389);">Chart [Domestic vs International Sales] was added to dashboard [Sales</span>
<span class="t" id="t96" style="top:1179.00px;font-size:20.62px;color:#f2f2f2;left:1345.00px;transform-origin:0 50%;transform:scaleX(1.0370);">Dashboard]</span>
<svg style="left:2072.6px;top:1167.8px" width="14" height="14" viewBox="0 0 14 14"><path d="M1.500 1.500l11 11M12.500 1.500l-11 11" stroke="#fff" stroke-width="2.400" stroke-linecap="butt"/></svg>
<svg style="left:1376.3px;top:1276.0px" width="29" height="29" viewBox="0 0 29 29"><circle cx="14.500" cy="14.500" r="14.300" fill="#737373"/><path d="M8.800 14.800l4 3.900 7.400-8" fill="none" stroke="#fff" stroke-width="2.600" stroke-linecap="round" stroke-linejoin="round"/></svg>
<span class="t" id="t97" style="top:1280.00px;font-size:20.62px;color:#f2f2f2;left:1441.10px;transform-origin:0 50%;transform:scaleX(1.0317);">Chart [Domestic vs International Sales] has been saved</span>
<svg style="left:1981.0px;top:1283.2px" width="14" height="14" viewBox="0 0 14 14"><path d="M1.500 1.500l11 11M12.500 1.500l-11 11" stroke="#fff" stroke-width="2.400" stroke-linecap="butt"/></svg>
<svg style="left:1360px;top:660px;filter:drop-shadow(1.500px 4px 3.500px rgba(0,0,0,.55))" width="120" height="120" viewBox="0 0 1336 1336">
<path d="M440 318 C395 322 378 370 384 430 C392 520 420 640 452 770 C420 735 380 690 318 654 C268 634 222 668 226 722 C232 760 262 792 330 880 C390 960 450 1040 520 1108 L520 1160 L700 1160 L760 1090 L820 1152 L898 1152 L896 1056 C940 990 985 900 1008 820 C1024 760 1026 700 1012 645 C1000 600 940 590 912 622 L897 668 C896 620 890 578 850 550 C805 530 752 545 735 600 L728 660 C726 600 712 548 670 525 C630 512 590 528 576 580 L580 660 C572 560 556 470 530 400 C510 345 480 318 440 318 Z" fill="#fff" stroke="#000" stroke-width="36" stroke-linejoin="round"/>
<path d="M622 802V1008M730 802V1008M840 802V1008" stroke="#000" stroke-width="32" stroke-linecap="round"/>
</svg>
<div class="a" style="left:0;top:1242px;width:2166px;height:94px;background:linear-gradient(to bottom,rgba(0,0,0,0) 0%,rgba(0,0,0,.025) 20%,rgba(0,0,0,.08) 40%,rgba(0,0,0,.17) 60%,rgba(0,0,0,.29) 80%,rgba(0,0,0,.43) 100%)"></div></body></html>
